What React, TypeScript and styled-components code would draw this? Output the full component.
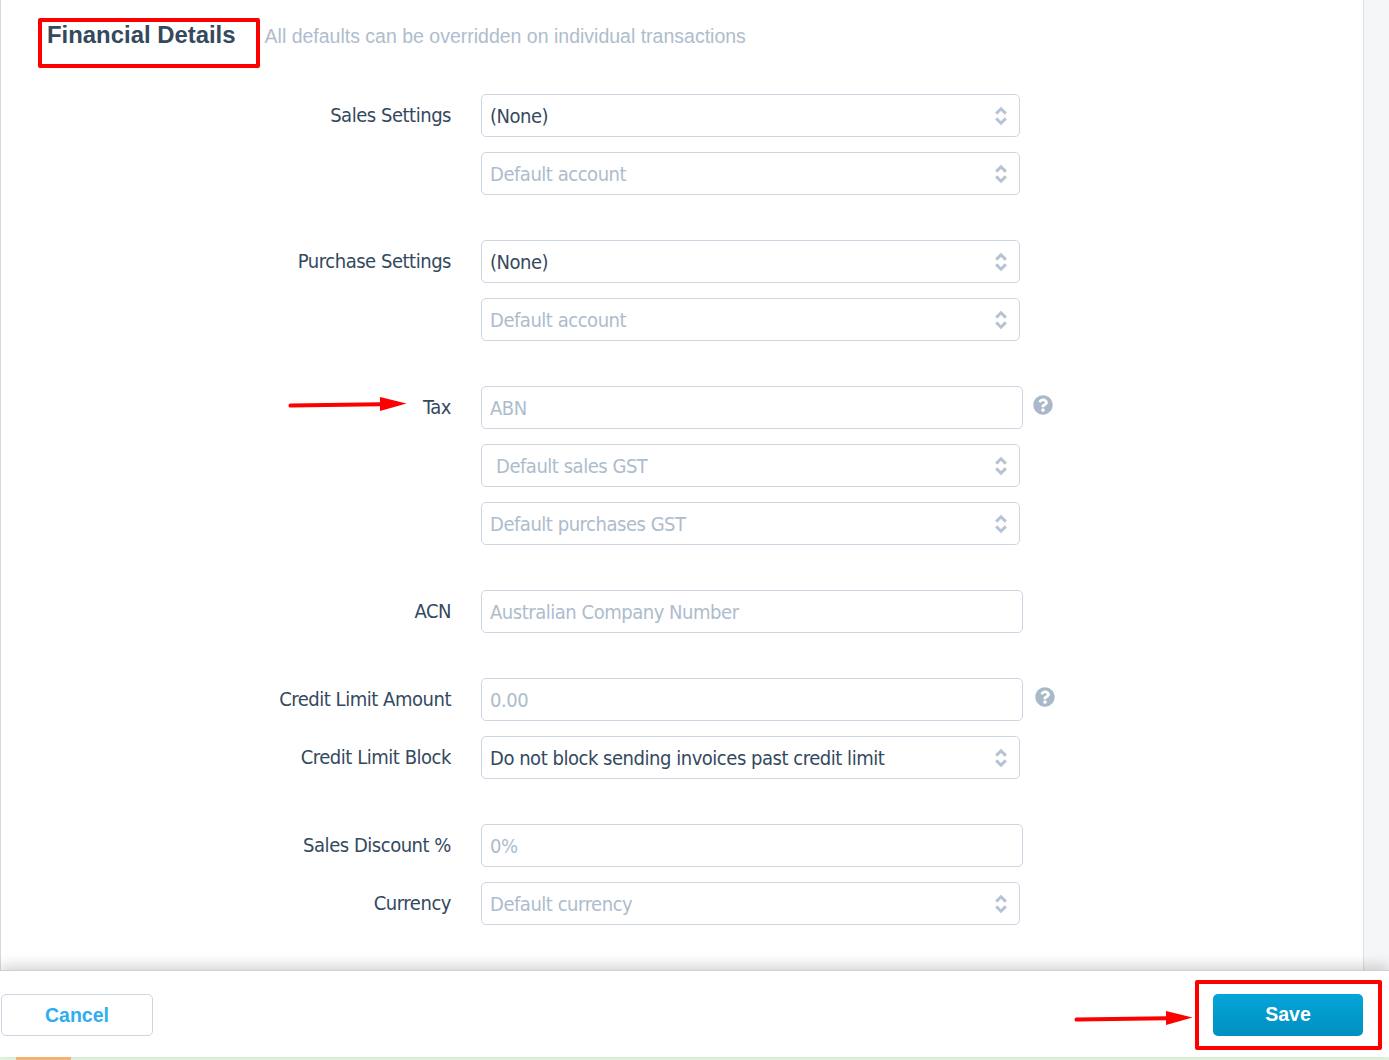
import React from "react";
import styled, { createGlobalStyle } from "styled-components";
import { FaQuestionCircle } from "react-icons/fa";

const Global = createGlobalStyle`
  html, body { margin: 0; padding: 0; background: #fff; }
  body { font-family: "DejaVu Sans Condensed", "DejaVu Sans", sans-serif; }
  * { box-sizing: border-box; }
`;

const Page = styled.div`
  position: relative;
  width: 1389px;
  height: 1060px;
  overflow: hidden;
  display: flex;
  flex-direction: column;
  background: #f5f6f8;
`;

const Panel = styled.main`
  width: 1364px;
  height: 970px;
  flex: none;
  background: #fff;
  border-left: 1px solid #d8d8d8;
  border-right: 1px solid #dcdfe3;
  padding-top: 21px;
`;

const Header = styled.header`
  display: flex;
  align-items: baseline;
  padding-left: 46px;
  height: 73px;
  font-family: "Liberation Sans", Arial, sans-serif;
`;

const Title = styled.h2`
  margin: 0;
  font-size: 23.9px;
  line-height: 28px;
  font-weight: 700;
  color: #34495e;
`;

const Subtitle = styled.span`
  margin-left: 29px;
  font-size: 19.5px;
  line-height: 28px;
  color: #aebdcd;
`;

const Form = styled.form`
  display: flex;
  flex-direction: column;
  gap: 45.5px;
`;

const Group = styled.section`
  display: grid;
  grid-template-columns: 450px 1fr;
  column-gap: 30px;
  row-gap: 15.5px;
`;

const Label = styled.label`
  grid-column: 1;
  text-align: right;
  height: 42.5px;
  line-height: 43px;
  font-size: 20px;
  letter-spacing: -0.47px;
  color: #34495e;
`;

const ControlRow = styled.div`
  grid-column: 2;
  display: flex;
  align-items: center;
`;

const Control = styled.div<{ $wide?: boolean; $muted?: boolean; $indent?: boolean }>`
  width: ${(p) => (p.$wide ? "542px" : "539px")};
  height: 42.5px;
  display: flex;
  align-items: center;
  justify-content: space-between;
  padding: 1px 12px 0 ${(p) => (p.$indent ? "14px" : "8px")};
  border: 1px solid #cbd6e2;
  border-radius: 5px;
  background: #fff;
  font-size: 20px;
  letter-spacing: -0.47px;
  color: ${(p) => (p.$muted ? "#adbccd" : "#34495e")};
`;

const HelpIcon = styled(FaQuestionCircle)<{ $shift?: boolean }>`
  width: 20px;
  height: 20px;
  margin-left: ${(p) => (p.$shift ? "12px" : "10px")};
  margin-top: -4px;
  color: #a9b9c9;
`;

const Footer = styled.footer`
  position: relative;
  flex: none;
  height: 87px;
  background: #fff;
  border-top: 1px solid #cfcfcf;
  box-shadow: 0 -5px 12px rgba(0, 0, 0, 0.16);
  display: flex;
  justify-content: space-between;
  align-items: flex-start;
  padding: 23px 26px 0 1px;
`;

const Button = styled.button<{ $primary?: boolean }>`
  width: ${(p) => (p.$primary ? "150px" : "152px")};
  height: 42px;
  padding: 0 0 ${(p) => (p.$primary ? "2px" : "0")};
  border-radius: 5px;
  font: 700 19.5px "Liberation Sans", Arial, sans-serif;
  cursor: pointer;
  border: ${(p) => (p.$primary ? "none" : "1px solid #cbd6e2")};
  color: ${(p) => (p.$primary ? "#fff" : "#2eaef0")};
  background: ${(p) => (p.$primary ? "linear-gradient(#05a5d9, #0090bf)" : "#fff")};
`;

const BottomStrip = styled.div`
  flex: none;
  height: 3px;
  background: #e4f4e2;
  padding-left: 16px;
`;

const StripMark = styled.div`
  width: 55px;
  height: 100%;
  background: #f9b675;
`;

const Highlight = styled.div<{ $x: number; $y: number; $w: number; $h: number }>`
  position: absolute;
  left: ${(p) => p.$x}px;
  top: ${(p) => p.$y}px;
  width: ${(p) => p.$w}px;
  height: ${(p) => p.$h}px;
  border: 4px solid #fe0000;
  border-radius: 2px;
  pointer-events: none;
`;

const ArrowSvg = styled.svg<{ $x: number; $y: number }>`
  position: absolute;
  left: ${(p) => p.$x}px;
  top: ${(p) => p.$y}px;
  width: 121px;
  height: 20px;
  pointer-events: none;
`;

const UpDown = () => (
  <svg width="12" height="20" viewBox="0 0 12 20" fill="none" stroke="#b5c3d3" strokeWidth="3" style={{ flex: "none" }}>
    <path d="M1.2 7.6 6 2.8l4.8 4.8" />
    <path d="M1.2 12.4 6 17.2l4.8-4.8" />
  </svg>
);

const Arrow = ({ x, y }: { x: number; y: number }) => (
  <ArrowSvg $x={x} $y={y} viewBox="0 0 121 20">
    <path d="M3.5 11.6 L94 10.2" stroke="#fe0000" strokeWidth="4" strokeLinecap="round" fill="none" />
    <path d="M93 3 L119.5 9.6 L93 17 Z" fill="#fe0000" />
  </ArrowSvg>
);

const Select = ({ text, muted, indent }: { text: string; muted?: boolean; indent?: boolean }) => (
  <ControlRow>
    <Control $muted={muted} $indent={indent}>
      {text}
      <UpDown />
    </Control>
  </ControlRow>
);

const Input = ({ text, help, shift }: { text: string; help?: boolean; shift?: boolean }) => (
  <ControlRow>
    <Control $wide $muted>{text}</Control>
    {help && <HelpIcon $shift={shift} />}
  </ControlRow>
);

export default function App() {
  return (
    <Page>
      <Global />
      <Panel>
        <Header>
          <Title>Financial Details</Title>
          <Subtitle>All defaults can be overridden on individual transactions</Subtitle>
        </Header>
        <Form>
          <Group>
            <Label>Sales Settings</Label>
            <Select text="(None)" />
            <Select text="Default account" muted />
          </Group>
          <Group>
            <Label>Purchase Settings</Label>
            <Select text="(None)" />
            <Select text="Default account" muted />
          </Group>
          <Group>
            <Label>Tax</Label>
            <Input text="ABN" help />
            <Select text="Default sales GST" muted indent />
            <Select text="Default purchases GST" muted />
          </Group>
          <Group>
            <Label>ACN</Label>
            <Input text="Australian Company Number" />
          </Group>
          <Group>
            <Label>Credit Limit Amount</Label>
            <Input text="0.00" help shift />
            <Label>Credit Limit Block</Label>
            <Select text="Do not block sending invoices past credit limit" />
          </Group>
          <Group>
            <Label>Sales Discount %</Label>
            <Input text="0%" />
            <Label>Currency</Label>
            <Select text="Default currency" muted />
          </Group>
        </Form>
      </Panel>
      <Footer>
        <Button type="button">Cancel</Button>
        <Button type="button" $primary>Save</Button>
      </Footer>
      <BottomStrip>
        <StripMark />
      </BottomStrip>
      <Highlight $x={38} $y={18} $w={222} $h={50} />
      <Highlight $x={1195} $y={980} $w={187} $h={70} />
      <Arrow x={287} y={394} />
      <Arrow x={1073} y={1008} />
    </Page>
  );
}
